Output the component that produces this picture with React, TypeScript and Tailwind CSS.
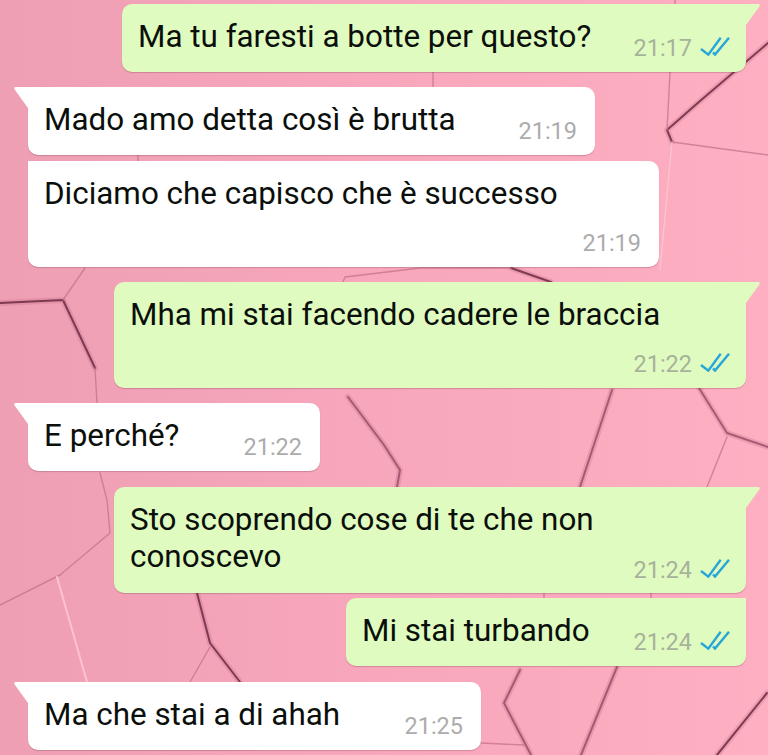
import React from 'react';

interface BubbleProps {
    mine?: boolean;
    tail?: boolean;
    stacked?: boolean;
    width: string;
    metaClass?: string;
    className?: string;
    text: React.ReactNode;
    time: string;
}

const DoubleCheck: React.FC = () => (
    <svg width="30" height="20" viewBox="0 0 30 20" fill="none" className="shrink-0 mb-[4px]" stroke="#27a6d8" strokeWidth="2.4">
        <path d="M1 13 L8.3 18.6 L20.7 1.7" />
        <path d="M13 16.4 L15 18.6 L29 1.7" />
    </svg>
);

const Bubble: React.FC<BubbleProps> = ({ mine, tail, stacked, width, metaClass, className, text, time }) => {
    const meta = (
        <div className={`flex items-center gap-[8px] h-[28px] text-[23.5px] leading-[28px] ${mine ? 'text-[#a7b29b] pr-[16px]' : 'text-[#acacac] pr-[18px]'} ${metaClass ?? (stacked ? 'mt-[17px]' : 'mt-[16px]')}`}>
            <span>{time}</span>
            {mine && <DoubleCheck />}
        </div>
    );

    return (
        <div className={`relative shrink-0 pt-[14px] pl-[16px] shadow-[0_1px_1px_rgba(90,40,50,0.25)] ${mine ? 'bg-[#e0fbbf] self-end rounded-[10px] rounded-tr-none' : 'bg-white self-start rounded-[10px] rounded-tl-none'} ${stacked ? 'h-[106px] flex flex-col' : 'h-[68px] flex justify-between'} ${width} ${className ?? ''}`}>
            {tail && (
                <svg width="16" height="22" viewBox="0 0 16 22" className={`absolute top-0 ${mine ? 'left-full' : 'right-full scale-x-[-1]'}`}>
                    <path d="M0 0 H12 Q15 0 13 3 L0 21 Z" fill={mine ? '#e0fbbf' : '#ffffff'} />
                </svg>
            )}
            <p className="text-[31.4px] leading-[37px] text-[#0b0f0b]">{text}</p>
            {stacked ? <div className="flex justify-end">{meta}</div> : meta}
        </div>
    );
};

const darkLines = [
    'M768 43 L700 101 L667 130 L672 142',
    'M0 303 L63 300 L95 368',
    'M511 268 L551 282',
    'M197 593 L210 643 L240 682',
    'M767 693 L717 755',
];

const softLines = [
    'M348 397 L384 445 L400 470 L397 487',
    'M699 388 L727 433 L768 447',
    'M612 390 L580 487',
    'M520 670 L504 703 L531 755',
    'M617 667 L581 755',
];

// the cracked wall drawn behind the chat
const Wallpaper: React.FC = () => (
    <svg viewBox="0 0 768 755" className="absolute inset-0 w-full h-full blur-[0.6px]" fill="none" strokeLinecap="round" strokeLinejoin="round">
        <g stroke="#a8506c" strokeWidth="6" opacity="0.2">
            {[...darkLines, ...softLines].map((d) => <path key={d} d={d} />)}
        </g>
        <g stroke="#6a2a42" strokeWidth="2" opacity="0.85">
            {darkLines.map((d) => <path key={d} d={d} />)}
        </g>
        <g stroke="#8e4560" strokeWidth="2" opacity="0.75">
            {softLines.map((d) => <path key={d} d={d} />)}
        </g>
        <g stroke="#c9748c" strokeWidth="1.4" opacity="0.8">
            <path d="M675 0 V4 M670 72 L667 130 M672 142 L768 155" />
            <path d="M433 72 V87 M138 155 V161" />
            <path d="M63 300 L85 268 M95 368 L97 403 M100 473 L107 500 L110 533 L60 575 L0 605" />
            <path d="M727 437 L707 487" />
            <path d="M210 647 L190 682" />
            <path d="M343 282 L345 277 L420 268 L511 268" />
            <path d="M481 743 L524 745" />
            <path d="M544 593 V598 M651 593 V598" />
        </g>
        <path d="M672 142 L660 270" stroke="#f7c7d3" strokeWidth="1.2" />
        <path d="M57 577 L87 682" stroke="#fbc3d0" strokeWidth="2" />
    </svg>
);

const App: React.FC = () => {
    return (
        <div className="relative h-[755px] w-[768px] overflow-hidden bg-[linear-gradient(90deg,#ee9fb4_0%,#f6a5ba_40%,#ffafc2_100%)] font-['Roboto',sans-serif]">
            <Wallpaper />
            <div className="relative flex flex-col pt-[4px] pl-[28px] pr-[22px]">
                <Bubble mine tail width="w-[624px]" text="Ma tu faresti a botte per questo?" time="21:17" />
                <Bubble tail width="w-[567px]" className="mt-[15px]" text="Mado amo detta così è brutta" time="21:19" />
                <Bubble stacked width="w-[631px]" className="mt-[6px]" text="Diciamo che capisco che è successo" time="21:19" />
                <Bubble mine tail stacked width="w-[632px]" className="mt-[15px]" text="Mha mi stai facendo cadere le braccia" time="21:22" />
                <Bubble tail width="w-[292px]" className="mt-[15px]" text="E perché?" time="21:22" />
                <Bubble mine tail stacked width="w-[632px]" className="mt-[16px]" metaClass="-mt-[19px]" text={<>Sto scoprendo cose di te che non<br />conoscevo</>} time="21:24" />
                <Bubble mine width="w-[400px]" className="mt-[5px]" text="Mi stai turbando" time="21:24" />
                <Bubble tail width="w-[453px]" className="mt-[16px]" text="Ma che stai a di ahah" time="21:25" />
            </div>
        </div>
    );
};

export default App;
